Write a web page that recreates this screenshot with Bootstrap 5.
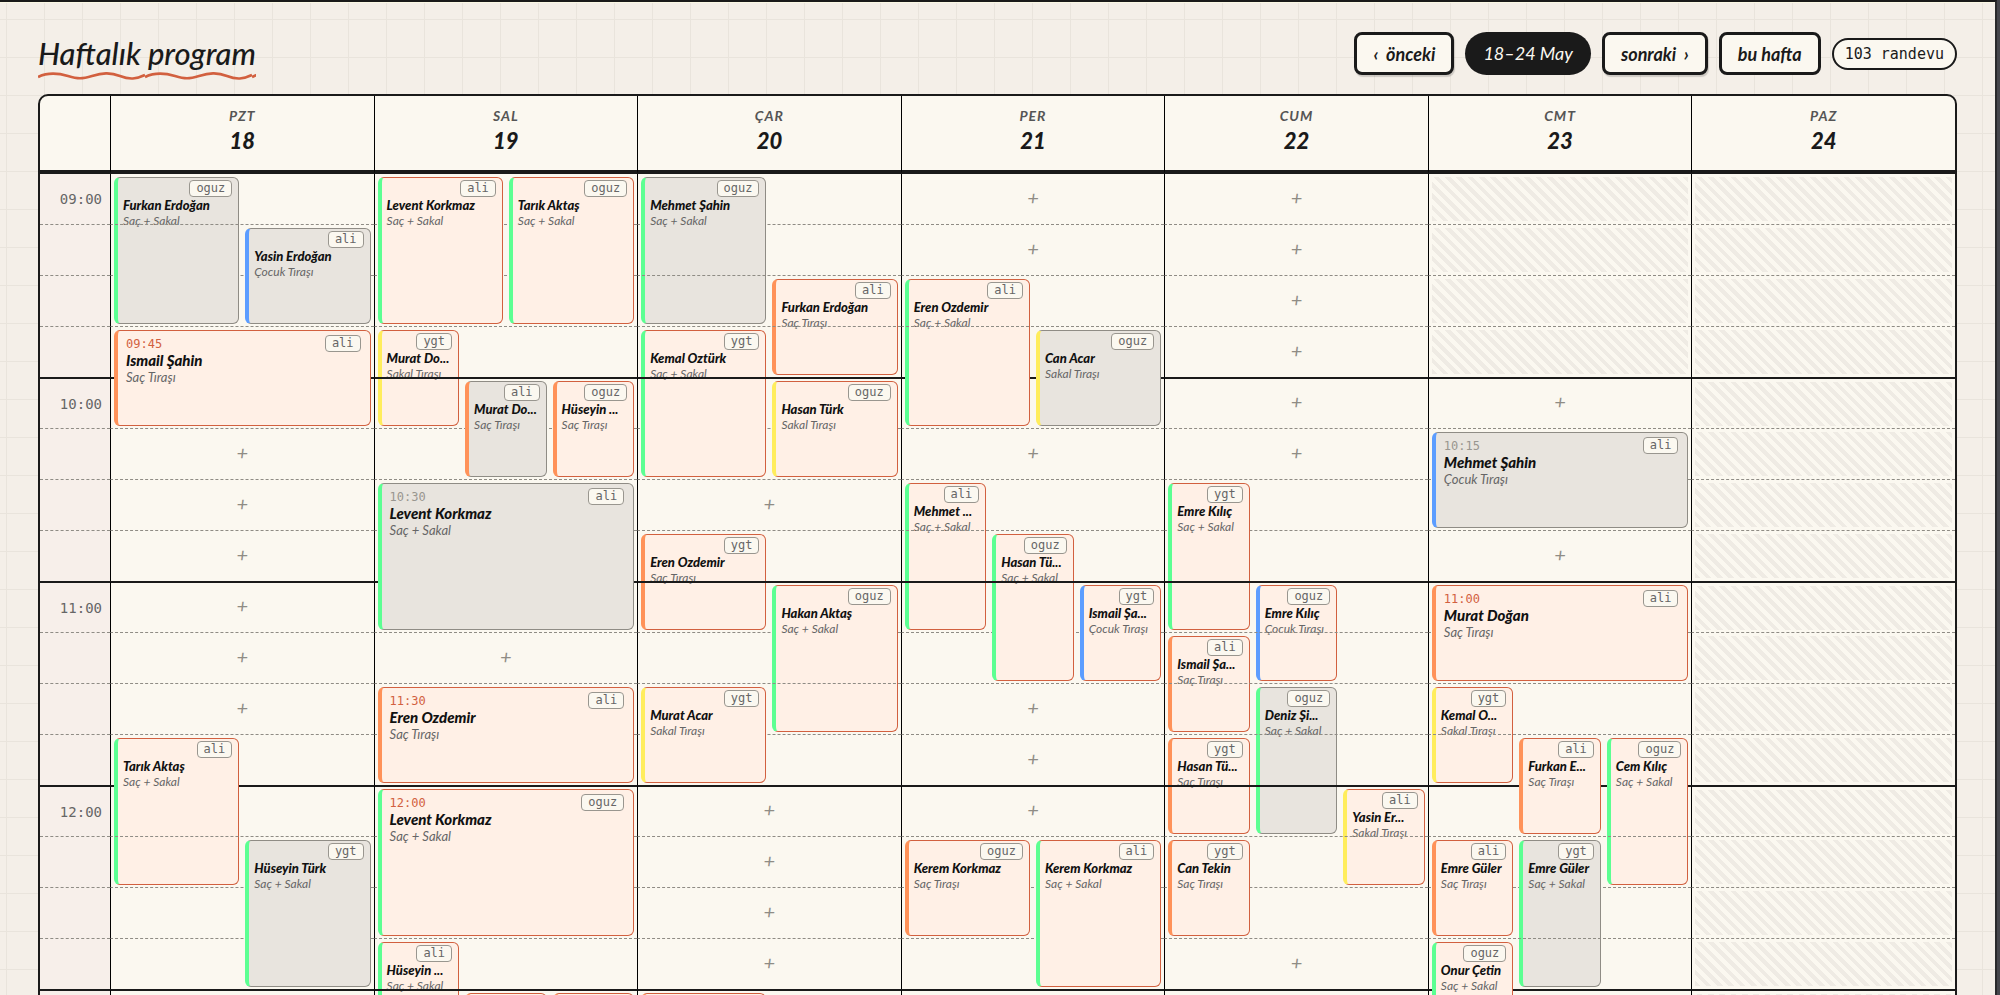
<!DOCTYPE html>
<html lang="tr">
<head>
<meta charset="utf-8">
<meta name="viewport" content="width=device-width, initial-scale=1">
<title>Haftalık program</title>
<link href="https://cdn.jsdelivr.net/npm/bootstrap@5.3.0/dist/css/bootstrap.min.css" rel="stylesheet">
<style>
  :root {
    --ink: #1a1a1a;
    --paper: #fbf8f0;
    --desk: #f4efe8;
    --rust: #d2603f;
    --hand: Lato, "Open Sans", sans-serif;
    --mono: "DejaVu Sans Mono", "Liberation Mono", monospace;
  }
  body { background: #46464c; font-family: var(--hand); color: var(--ink); overflow: hidden; height: 100vh; }
  .desk {
    height: 100vh;
    overflow: hidden;
    margin-right: 3px;
    padding: 30px 38px 0;
    border-top: 2px solid var(--ink);
    border-right: 2px solid #29292b;
    background-color: var(--desk);
    background-image:
      linear-gradient(#e9e4dc 1px, transparent 1px),
      linear-gradient(90deg, #e9e4dc 1px, transparent 1px);
    background-size: 38px 38px;
    background-position: 6px 17px;
    box-shadow: inset 0 1px 0 #fbf8e4;
  }
  .week-title { font-size: 31px; line-height: 42px; font-style: italic; font-weight: 500; padding-bottom: 4px; }
  .week-title svg { position: absolute; left: 0; bottom: -2px; width: 100%; height: 8px; }
  .ctl {
    height: 43px; padding: 0 16px; border-radius: 8px;
    border: 3px solid var(--ink); background: var(--paper); color: var(--ink);
    font-size: 18px; line-height: 32px; font-style: italic; font-weight: 700;
  }
  .ctl:hover { background: #fff; }
  .raised { box-shadow: 1px 2px 1px rgba(0, 0, 0, .16); }
  .range-pill {
    height: 43px; padding: 0 18px; background: var(--ink); color: var(--paper);
    font-size: 18px; line-height: 42px; font-style: italic;
  }
  .count-pill {
    height: 32px; padding: 0 11px; border: 2px solid var(--ink); background: var(--paper);
    font: 15px/28px var(--mono);
  }
  .board { border: 2px solid var(--ink); border-radius: 10px 10px 0 0; overflow: hidden; background: var(--paper); }
  .week { table-layout: fixed; border-collapse: separate; border-spacing: 0; width: 100%; }
  .week .hours { width: 70px; }
  .week th, .week td { padding: 0; vertical-align: middle; }
  .week thead th { height: 78px; padding-bottom: 5px; border-bottom: 4px solid var(--ink); text-align: center; font-style: italic; }
  .week th + th, .week td { border-left: 1px solid #000; }
  .dow { font-size: 14px; line-height: 20px; letter-spacing: 1px; color: #555; font-weight: 700; }
  .dom { font-size: 22px; line-height: 30px; font-weight: 900; }
  .week tbody th, .week tbody td { height: 51px; border-top: 1px dashed #8f8c85; }
  .week tbody tr.full th, .week tbody tr.full td { border-top: 2px solid var(--ink); }
  .week tbody tr:first-child th, .week tbody tr:first-child td { height: 50px; border-top: 0; }
  .week tbody th { background: #f7efea; padding-right: 8px; text-align: right; font: 14px/18px var(--mono); color: #666; }
  .booked { position: relative; }
  .add {
    display: block; width: 100%; padding: 0 0 5px; border: 0; background: none;
    text-align: center; color: #8f8c85; font-size: 20px; line-height: 24px; font-style: italic; font-weight: 400;
  }
  .shut {
    height: 44px; margin: 0 3px;
    background: repeating-linear-gradient(45deg, #efebe4 0 4px, transparent 4px 8px);
  }
  .visit {
    position: absolute; top: 3px; overflow: hidden;
    padding: 19px 5px 0 5px;
    border: 1px solid var(--rust); border-left: 4px solid; border-radius: 6px;
    background: #fff0e6; color: var(--ink); font-style: italic;
  }
  tr.full .visit { top: 2px; }
  tr.full:first-child .visit { top: 3px; }
  .past { background: #e8e4de; border-color: #8f8c85; }
  .k-both { border-left-color: #5cff92; }
  .k-hair { border-left-color: #ff9259; }
  .k-beard { border-left-color: #ffed5c; }
  .k-kid { border-left-color: #5c9dff; }
  .who { font-size: 13px; line-height: 16px; font-weight: 900; white-space: nowrap; color: #111; }
  .svc { font-size: 12px; line-height: 16px; white-space: nowrap; color: #666; }
  .tag {
    position: absolute; top: 2px; right: 6px; padding: 0 6px;
    border: 1px solid #99968f; border-radius: 4px; background: var(--paper);
    font: 12px/15px var(--mono); color: #666;
  }
  .wide { padding: 5px 8px 0; }
  .wide .at { font: 12px/16px var(--mono); color: var(--rust); }
  .wide.past .at { color: #99968f; }
  .wide .who { font-size: 15px; line-height: 16px; }
  .wide .svc { font-size: 13px; line-height: 18px; }
  .wide .tag { top: 4px; right: 9px; }
</style>
</head>
<body>
<main class="desk">
  <header class="d-flex justify-content-between align-items-start flex-wrap mb-3">
    <h1 class="week-title position-relative mb-0">Haftalık program
      <svg aria-hidden="true">
        <defs>
          <pattern id="wave" width="107" height="8" patternUnits="userSpaceOnUse">
            <path d="M0 5 C10 0 20 1 30 4 S44 7 54 4 S72 0 82 4 S98 7 107 3" fill="none" stroke="#d2603f" stroke-width="2.6"/>
          </pattern>
        </defs>
        <rect width="100%" height="8" fill="url(#wave)"/>
      </svg>
    </h1>
    <nav class="d-flex align-items-center" style="gap:11px" aria-label="Hafta">
      <button type="button" class="ctl raised">‹ &nbsp;önceki</button>
      <span class="range-pill rounded-pill">18–24 May</span>
      <button type="button" class="ctl raised">sonraki &nbsp;›</button>
      <button type="button" class="ctl">bu hafta</button>
      <span class="count-pill rounded-pill">103 randevu</span>
    </nav>
  </header>

  <div class="board">
    <table class="week">
      <thead>
        <tr id="days"><th class="hours" aria-label="Saat"></th></tr>
      </thead>
      <tbody id="slots"></tbody>
    </table>
  </div>
</main>

<script src="https://cdn.jsdelivr.net/npm/bootstrap@5.3.0/dist/js/bootstrap.bundle.min.js"></script>
<script>
  const DAYS = [['PZT', 18], ['SAL', 19], ['ÇAR', 20], ['PER', 21], ['CUM', 22], ['CMT', 23], ['PAZ', 24]];
  const SERVICES = {
    both: 'Saç + Sakal', hair: 'Saç Tıraşı', beard: 'Sakal Tıraşı', kid: 'Çocuk Tıraşı'
  };
  const SLOT = 51, OPEN_SLOTS = 16;

  // day, first quarter-hour slot, slots, lane, lanes, customer, service, barber, past
  const VISITS = [
    [0, 0, 3, 0, 2, 'Furkan Erdoğan', 'both', 'oguz', 1],
    [0, 1, 2, 1, 2, 'Yasin Erdoğan', 'kid', 'ali', 1],
    [0, 3, 2, 0, 1, 'Ismail Şahin', 'hair', 'ali', 0],
    [0, 11, 3, 0, 2, 'Tarık Aktaş', 'both', 'ali', 0],
    [0, 13, 3, 1, 2, 'Hüseyin Türk', 'both', 'ygt', 1],
    [1, 0, 3, 0, 2, 'Levent Korkmaz', 'both', 'ali', 0],
    [1, 0, 3, 1, 2, 'Tarık Aktaş', 'both', 'oguz', 0],
    [1, 3, 2, 0, 3, 'Murat Do...', 'beard', 'ygt', 0],
    [1, 4, 2, 1, 3, 'Murat Do...', 'hair', 'ali', 1],
    [1, 4, 2, 2, 3, 'Hüseyin ...', 'hair', 'oguz', 0],
    [1, 6, 3, 0, 1, 'Levent Korkmaz', 'both', 'ali', 1],
    [1, 10, 2, 0, 1, 'Eren Ozdemir', 'hair', 'ali', 0],
    [1, 12, 3, 0, 1, 'Levent Korkmaz', 'both', 'oguz', 0],
    [1, 15, 3, 0, 3, 'Hüseyin ...', 'both', 'ali', 0],
    [1, 16, 2, 1, 3, '', 'hair', '', 0],
    [1, 16, 2, 2, 3, '', 'hair', '', 0],
    [2, 0, 3, 0, 2, 'Mehmet Şahin', 'both', 'oguz', 1],
    [2, 2, 2, 1, 2, 'Furkan Erdoğan', 'hair', 'ali', 0],
    [2, 3, 3, 0, 2, 'Kemal Oztürk', 'both', 'ygt', 0],
    [2, 4, 2, 1, 2, 'Hasan Türk', 'beard', 'oguz', 0],
    [2, 7, 2, 0, 2, 'Eren Ozdemir', 'hair', 'ygt', 0],
    [2, 8, 3, 1, 2, 'Hakan Aktaş', 'both', 'oguz', 0],
    [2, 10, 2, 0, 2, 'Murat Acar', 'beard', 'ygt', 0],
    [2, 16, 2, 0, 2, '', 'hair', '', 0],
    [3, 2, 3, 0, 2, 'Eren Ozdemir', 'both', 'ali', 0],
    [3, 3, 2, 1, 2, 'Can Acar', 'beard', 'oguz', 1],
    [3, 6, 3, 0, 3, 'Mehmet ...', 'both', 'ali', 0],
    [3, 7, 3, 1, 3, 'Hasan Tü...', 'both', 'oguz', 0],
    [3, 8, 2, 2, 3, 'Ismail Şa...', 'kid', 'ygt', 0],
    [3, 13, 2, 0, 2, 'Kerem Korkmaz', 'hair', 'oguz', 0],
    [3, 13, 3, 1, 2, 'Kerem Korkmaz', 'both', 'ali', 0],
    [4, 6, 3, 0, 3, 'Emre Kılıç', 'both', 'ygt', 0],
    [4, 8, 2, 1, 3, 'Emre Kılıç', 'kid', 'oguz', 0],
    [4, 9, 2, 0, 3, 'Ismail Şa...', 'hair', 'ali', 0],
    [4, 10, 3, 1, 3, 'Deniz Şi...', 'both', 'oguz', 1],
    [4, 11, 2, 0, 3, 'Hasan Tü...', 'hair', 'ygt', 0],
    [4, 12, 2, 2, 3, 'Yasin Er...', 'beard', 'ali', 0],
    [4, 13, 2, 0, 3, 'Can Tekin', 'hair', 'ygt', 0],
    [5, 5, 2, 0, 1, 'Mehmet Şahin', 'kid', 'ali', 1],
    [5, 8, 2, 0, 1, 'Murat Doğan', 'hair', 'ali', 0],
    [5, 10, 2, 0, 3, 'Kemal O...', 'beard', 'ygt', 0],
    [5, 11, 2, 1, 3, 'Furkan E...', 'hair', 'ali', 0],
    [5, 11, 3, 2, 3, 'Cem Kılıç', 'both', 'oguz', 0],
    [5, 13, 2, 0, 3, 'Emre Güler', 'hair', 'ali', 0],
    [5, 13, 3, 1, 3, 'Emre Güler', 'both', 'ygt', 1],
    [5, 15, 3, 0, 3, 'Onur Çetin', 'both', 'oguz', 0]
  ];

  const clock = s => String(9 + Math.floor(s / 4)).padStart(2, '0') + ':' + String(s % 4 * 15).padStart(2, '0');
  const isShut = (day, s) => day === 6 || (day === 5 && s < 4);

  function card([, s, len, lane, lanes, name, kind, barber, past]) {
    const wide = lanes === 1;
    const box = `left:calc(${100 * lane / lanes}% + 3px);width:calc(${100 / lanes}% - 6px);height:${len * SLOT - 6}px`;
    const text = name
      ? (wide ? `<div class="at">${clock(s)}</div>` : '') +
        `<div class="who">${name}</div><div class="svc">${SERVICES[kind]}</div><span class="tag">${barber}</span>`
      : '';
    return `<article class="visit ${past ? 'past ' : ''}${wide ? 'wide ' : ''}k-${kind}" style="${box}">${text}</article>`;
  }

  function cell(day, s) {
    if (isShut(day, s)) return '<td><div class="shut"></div></td>';
    const starting = VISITS.filter(v => v[0] === day && v[1] === s);
    if (starting.length) return `<td class="booked">${starting.map(card).join('')}</td>`;
    const busy = VISITS.some(v => v[0] === day && v[1] < s && s < v[1] + v[2]);
    return busy || s >= OPEN_SLOTS ? '<td></td>' : '<td><button type="button" class="add">+</button></td>';
  }

  document.getElementById('days').insertAdjacentHTML('beforeend',
    DAYS.map(([n, d]) => `<th scope="col"><div class="dow">${n}</div><div class="dom">${d}</div></th>`).join(''));

  document.getElementById('slots').innerHTML = Array.from({ length: OPEN_SLOTS + 1 }, (_, s) =>
    `<tr class="${s % 4 ? '' : 'full'}"><th scope="row">${s % 4 || s >= OPEN_SLOTS ? '' : clock(s)}</th>` +
    DAYS.map((_, day) => cell(day, s)).join('') + '</tr>').join('');
</script>
</body>
</html>
